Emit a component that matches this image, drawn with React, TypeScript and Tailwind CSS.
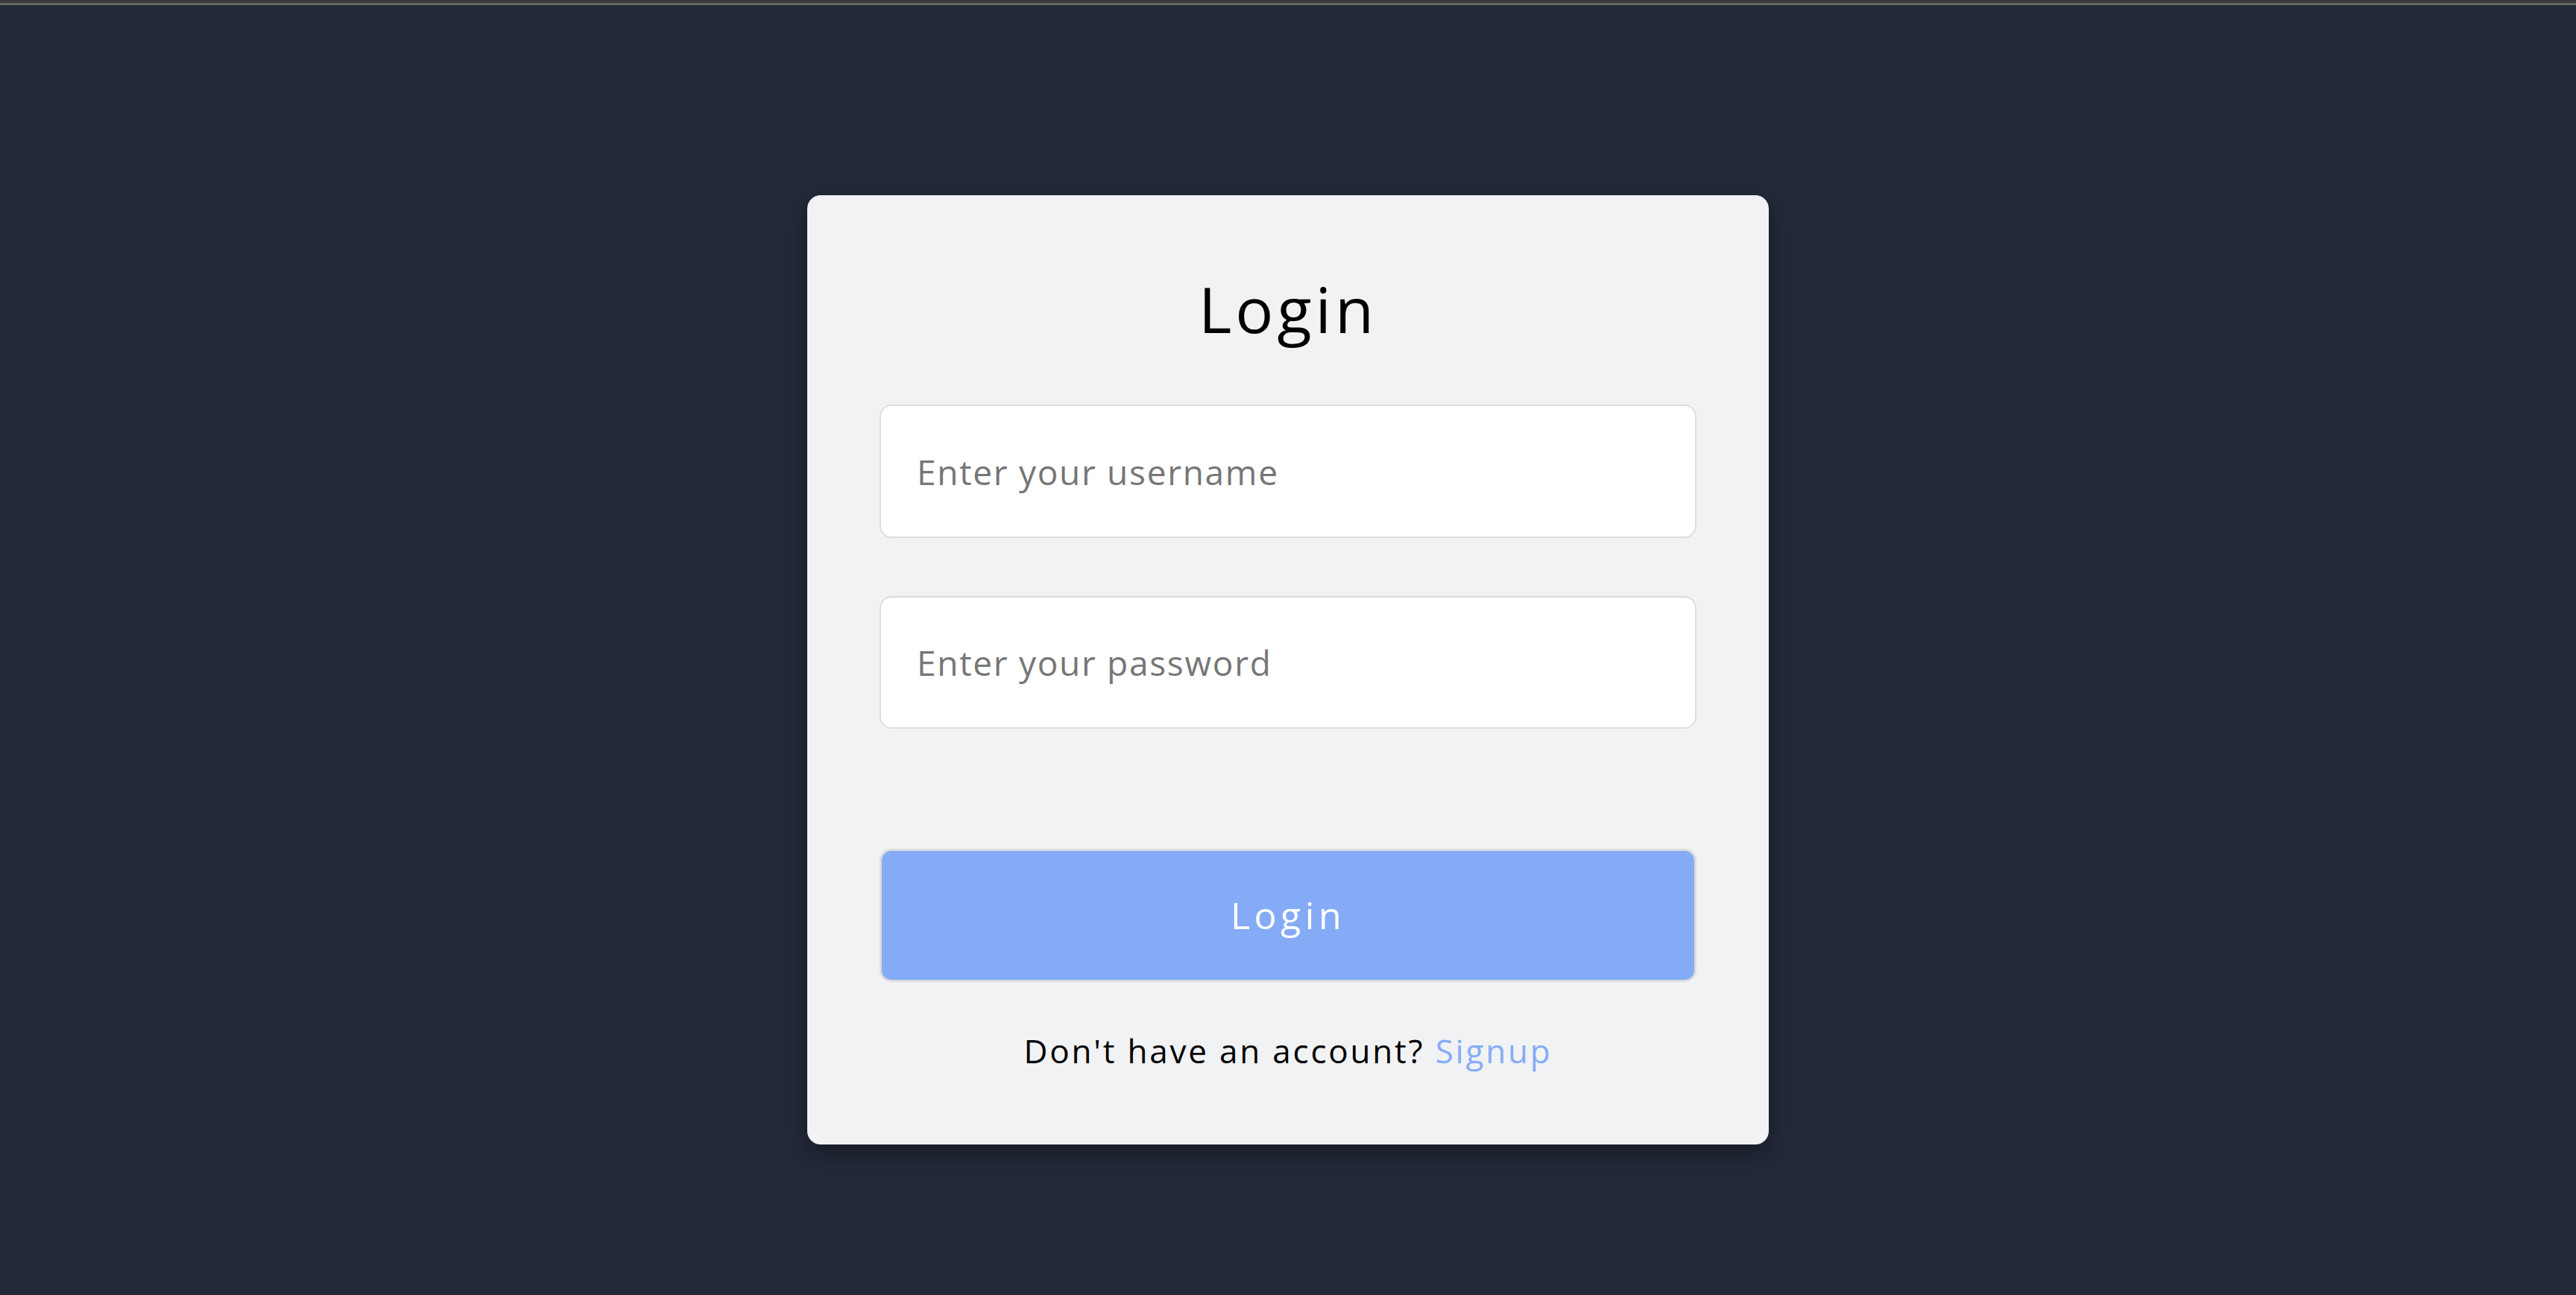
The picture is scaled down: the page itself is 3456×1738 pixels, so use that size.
export default function App() {
  return (
    <div className="min-h-[1738px] bg-[#222938] font-['Open_Sans',sans-serif]">
      {/* browser chrome strip at the very top */}
      <div className="h-[4px] bg-[#3a3a3a]" />
      <div className="h-[3px] bg-[#666666]" />

      <div className="flex justify-center pt-[255px]">
        <form
          onSubmit={(e) => e.preventDefault()}
          className="flex w-[1290px] flex-col rounded-[18px] bg-[#f1f2f4] px-[97px] pb-[93px] pt-[101px] shadow-[0_12px_32px_rgba(0,0,0,0.35)]"
        >
          <h1 className="text-center text-[85px] leading-[102px] font-normal tracking-[5px] text-black">Login</h1>

          <input
            type="text"
            placeholder="Enter your username"
            className="mt-[78px] h-[179px] w-full rounded-[16px] border-2 border-[#dddddd] bg-white pl-[48px] text-[46px] tracking-[1.7px] text-black outline-none placeholder:text-[#767676]"
          />
          <input
            type="password"
            placeholder="Enter your password"
            className="mt-[78px] h-[178px] w-full rounded-[16px] border-2 border-[#dddddd] bg-white pl-[48px] text-[46px] tracking-[1.7px] text-black outline-none placeholder:text-[#767676]"
          />

          <button
            type="submit"
            className="mt-[161px] h-[179px] w-full rounded-[16px] border-[3px] border-[#dddddd] bg-[#85abf6] text-[50px] tracking-[5.5px] text-white"
          >
            Login
          </button>

          <p className="mt-[59px] text-center text-[44px] leading-[66px] tracking-[2.8px] text-black">
            Don't have an account? <a href="#" className="text-[#86acf6]">Signup</a>
          </p>
        </form>
      </div>
    </div>
  );
}
